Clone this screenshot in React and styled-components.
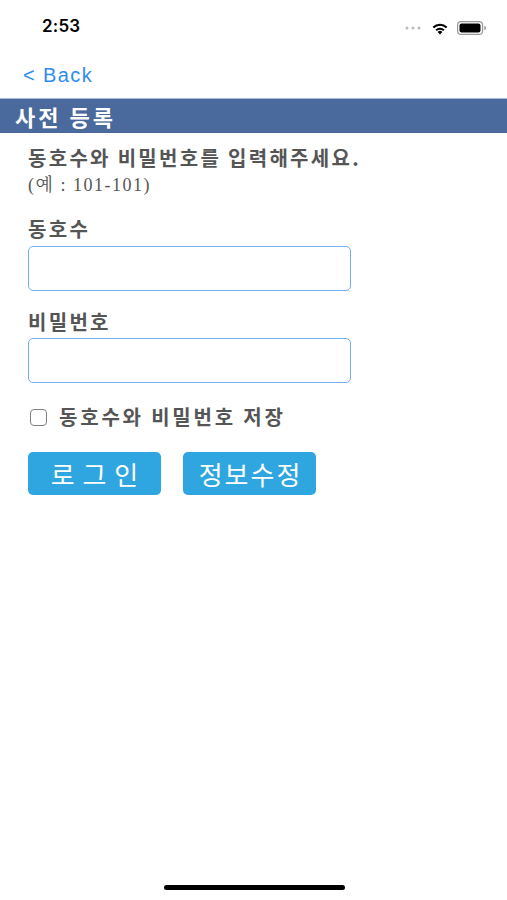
import React from "react";
import styled, { createGlobalStyle } from "styled-components";

const Global = createGlobalStyle`
  html, body { margin: 0; padding: 0; background: #fff; }
  body { font-family: "Noto Sans CJK KR", "Noto Sans", sans-serif; }
  * { box-sizing: border-box; }
`;

const Screen = styled.div`
  width: 507px;
  height: 900px;
  position: relative;
  background: #fff;
  overflow: hidden;
  display: flex;
  flex-direction: column;
`;

const StatusBar = styled.div`
  height: 52px;
  display: flex;
  align-items: center;
  justify-content: space-between;
  padding: 0 20px 0 42px;
`;

const Time = styled.span`
  font-family: "Inter", "Liberation Sans", sans-serif;
  font-weight: 600;
  font-size: 17px;
  color: #000;
  letter-spacing: 0.2px;
`;

const StatusIcons = styled.div`
  display: flex;
  align-items: center;
  gap: 8px;
  margin-top: 4px;
`;

const NavBar = styled.div`
  height: 46px;
  display: flex;
  align-items: center;
  padding-left: 23px;
`;

const BackLink = styled.span`
  font-family: "Liberation Sans", Arial, sans-serif;
  font-size: 20px;
  letter-spacing: 1.4px;
  color: #2f8cf0;
`;

const Header = styled.div`
  height: 35px;
  background: #4a6a9d;
  border-top: 1px solid #a9bbd6;
  display: flex;
  align-items: center;
  padding-left: 15px;
  color: #fff;
  font-weight: 700;
  font-size: 22px;
  letter-spacing: 3px;
`;

const Content = styled.div`
  padding: 12px 28px 0;
  display: flex;
  flex-direction: column;
`;

const BoldText = styled.div`
  font-weight: 700;
  font-size: 20px;
  letter-spacing: ${(p) => p.$ls || 2.3}px;
  color: #555;
  line-height: 26px;
`;

const Intro = styled(BoldText)``;

const Example = styled.div`
  font-family: "Liberation Serif", "Noto Serif CJK KR", serif;
  font-size: 18px;
  letter-spacing: 1.5px;
  color: #555;
  line-height: 26px;
  margin-top: 1px;
`;

const Label = styled(BoldText)`
  margin-top: ${(p) => p.$mt}px;
  margin-bottom: ${(p) => p.$mb}px;
`;

const Input = styled.input`
  width: 323px;
  height: 45px;
  border: 1.5px solid #74aef2;
  border-radius: 5px;
  outline: none;
  font-size: 17px;
  padding: 0 8px;
`;

const CheckRow = styled(BoldText).attrs({ as: "label" })`
  display: flex;
  align-items: center;
  gap: 12px;
  margin-top: 21px;
  margin-left: 2px;
`;

const Box = styled.span`
  width: 17px;
  height: 17px;
  border: 1.5px solid #808080;
  border-radius: 4px;
  display: inline-block;
  flex: none;
`;

const Buttons = styled.div`
  display: flex;
  gap: 22px;
  margin-top: 22px;
`;

const Button = styled.button`
  width: 133px;
  height: 43px;
  border: none;
  border-radius: 5px;
  background: #2fa6e0;
  color: #fff;
  font-family: "Noto Sans CJK KR", sans-serif;
  font-size: 26px;
  font-weight: 400;
  line-height: 43px;
  letter-spacing: ${(p) => p.$ls}px;
  text-indent: ${(p) => p.$ls}px;
  padding: 0;
`;

const HomeIndicator = styled.div`
  position: absolute;
  bottom: 10px;
  left: 164px;
  width: 181px;
  height: 5px;
  border-radius: 3px;
  background: #000;
`;

export default function App() {
  return (
    <Screen>
      <Global />
      <StatusBar>
        <Time>2:53</Time>
        <StatusIcons>
          <svg width="18" height="4" viewBox="0 0 18 4">
            <circle cx="2" cy="2" r="1.5" fill="#bbb" />
            <circle cx="8" cy="2" r="1.5" fill="#bbb" />
            <circle cx="14" cy="2" r="1.5" fill="#bbb" />
          </svg>
          <svg width="18" height="13" viewBox="0 0 18 13">
            <path d="M9 12.5 L6.6 9.9 A3.4 3.4 0 0 1 11.4 9.9 Z" fill="#000" />
            <path d="M4.4 7.6 A6.6 6.6 0 0 1 13.6 7.6 L12.2 9.1 A4.6 4.6 0 0 0 5.8 9.1 Z" fill="#000" />
            <path d="M1.6 4.8 A10.5 10.5 0 0 1 16.4 4.8 L15 6.3 A8.4 8.4 0 0 0 3 6.3 Z" fill="#000" />
          </svg>
          <svg width="30" height="14" viewBox="0 0 30 14">
            <rect x="0.6" y="0.6" width="25" height="12.8" rx="3.5" fill="none" stroke="#999" strokeWidth="1.2" />
            <rect x="2.5" y="2.5" width="21" height="9" rx="2" fill="#000" />
            <path d="M27.3 4.8 Q29 5.3 29 7 Q29 8.7 27.3 9.2 Z" fill="#999" />
          </svg>
        </StatusIcons>
      </StatusBar>
      <NavBar>
        <BackLink>&lt; Back</BackLink>
      </NavBar>
      <Header>사전 등록</Header>
      <Content>
        <Intro>동호수와 비밀번호를 입력해주세요.</Intro>
        <Example>(예 : 101-101)</Example>
        <Label $mt={18} $mb={4}>동호수</Label>
        <Input type="text" />
        <Label $mt={18} $mb={3}>비밀번호</Label>
        <Input type="password" />
        <CheckRow $ls={2.8}>
          <Box />
          동호수와 비밀번호 저장
        </CheckRow>
        <Buttons>
          <Button $ls={1}>로 그 인</Button>
          <Button $ls={2}>정보수정</Button>
        </Buttons>
      </Content>
      <HomeIndicator />
    </Screen>
  );
}
